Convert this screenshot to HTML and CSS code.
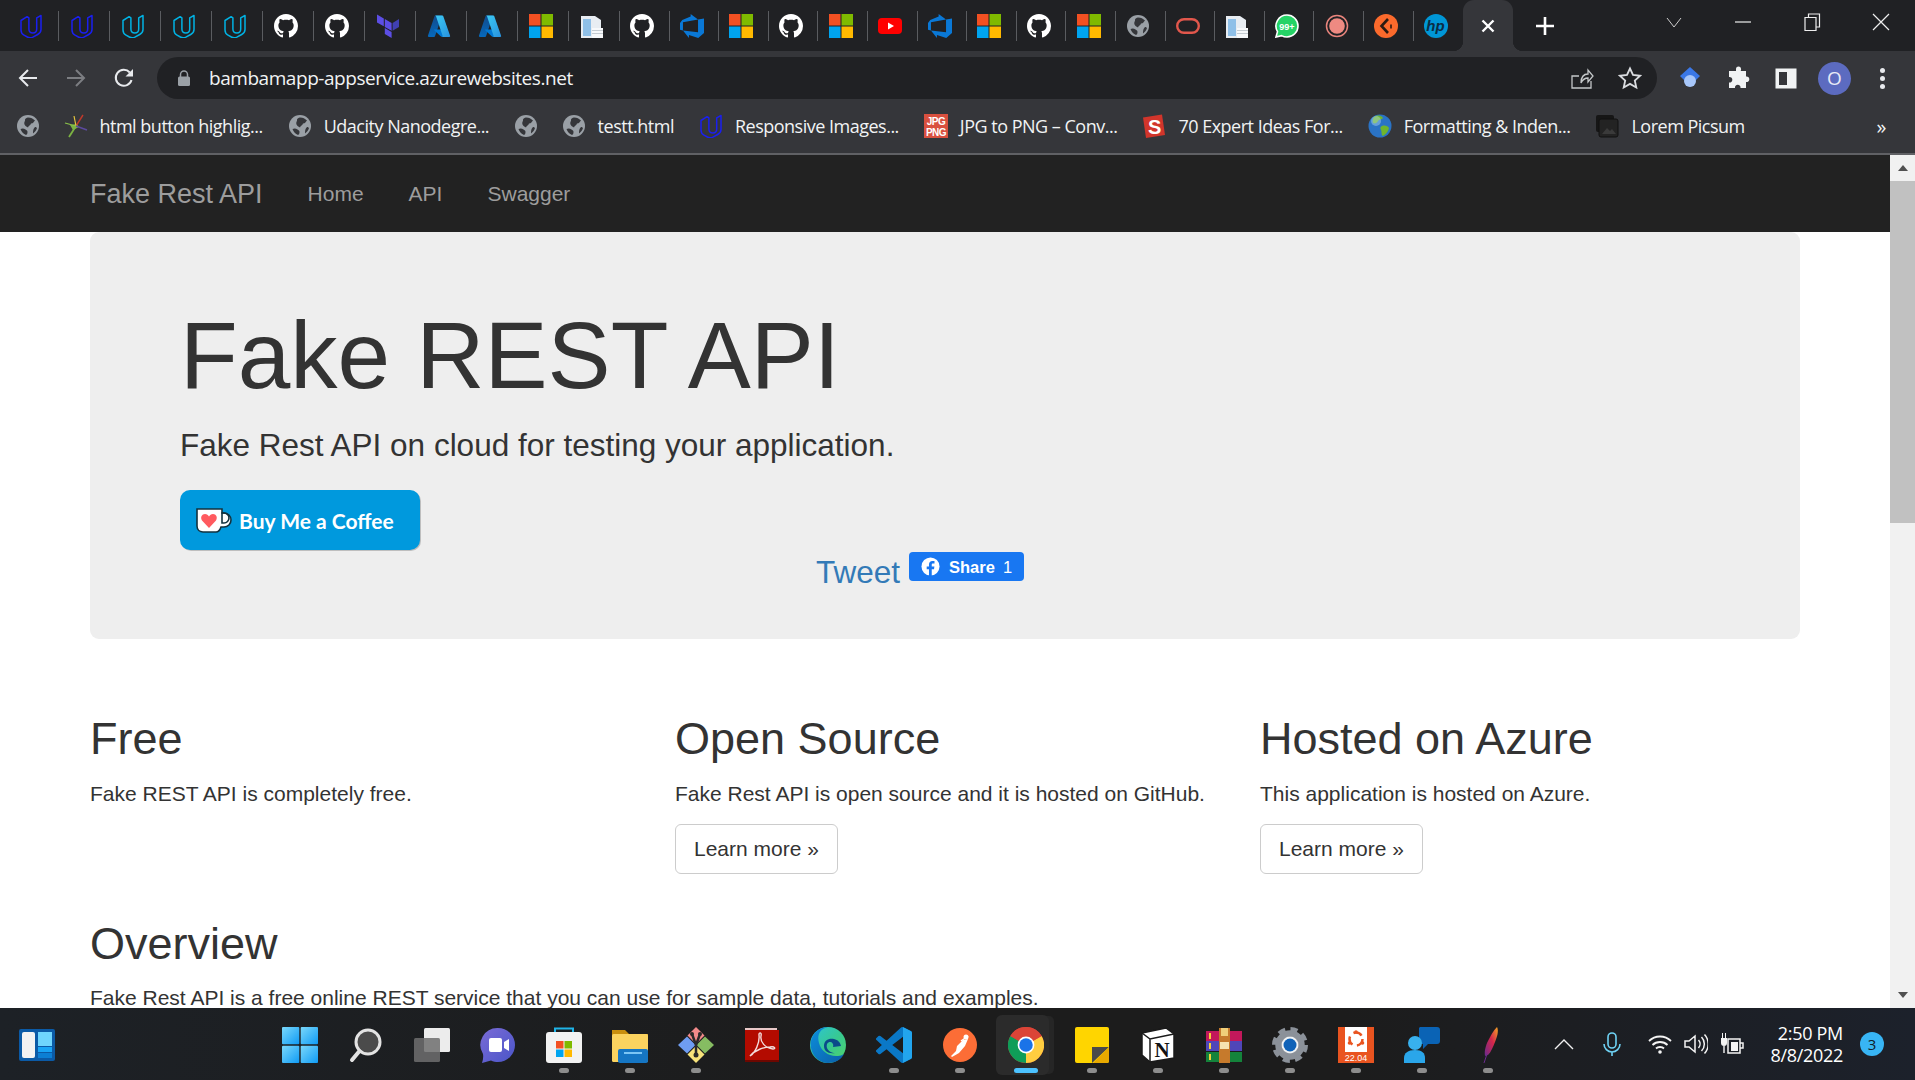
FILE: index.html
```html
<!DOCTYPE html>
<html lang="en">
<head>
    <meta charset="UTF-8">
    <title>Fake Rest API</title>
    <link rel="stylesheet" href="styles.css">
</head>
<body>
    <svg class="sprite" width="0" height="0">
        <defs>
            <linearGradient id="g-start" x1="0" y1="0" x2="1" y2="1"><stop offset="0" stop-color="#7ad8fb"/><stop offset="1" stop-color="#0f9bf5"/></linearGradient>
            <linearGradient id="g-az1" x1="0" y1="0" x2="0" y2="1"><stop offset="0" stop-color="#114a8b"/><stop offset="1" stop-color="#0669bc"/></linearGradient>
            <linearGradient id="g-az2" x1="0" y1="0" x2="1" y2="1"><stop offset="0" stop-color="#3ccbf4"/><stop offset="1" stop-color="#2892df"/></linearGradient>
            <linearGradient id="g-edge" x1="0" y1="0" x2="1" y2="1"><stop offset="0" stop-color="#2cc4d8"/><stop offset=".55" stop-color="#38c98e"/><stop offset="1" stop-color="#52d36a"/></linearGradient>
            <linearGradient id="g-edge2" x1="0" y1="0" x2="1" y2="1"><stop offset="0" stop-color="#0d8fdc"/><stop offset="1" stop-color="#0a5fa8"/></linearGradient>
            <linearGradient id="g-teams" x1="0" y1="0" x2="1" y2="1"><stop offset="0" stop-color="#7a6bd6"/><stop offset="1" stop-color="#4a55c8"/></linearGradient>
            <linearGradient id="g-feather" x1="1" y1="0" x2="0" y2="1"><stop offset="0" stop-color="#f5a623"/><stop offset=".45" stop-color="#d5264b"/><stop offset="1" stop-color="#6a2b8e"/></linearGradient>

            <symbol id="i-uda" viewBox="0 0 24 24"><path fill="none" stroke="currentColor" stroke-width="1.5" stroke-linejoin="round" d="M2 6.5V16c0 2.6 1 4 3 5.1l3.4 1.9c2 1 3.700 1 5.500.1l4.800-2.600c2-1.100 3.300-2.600 3.300-5V1.500l-4.300 2.400V15c0 2.500-1.700 4-3.900 4s-3.900-1.500-3.900-4V3.900l-1.800-1.200z"/></symbol>
            <symbol id="i-gh" viewBox="0 0 16 16"><path fill="#fff" d="M8 0C3.580 0 0 3.580 0 8c0 3.540 2.290 6.530 5.470 7.590.4.070.55-.17.55-.38 0-.19-.01-.82-.01-1.490-2.010.37-2.530-.49-2.690-.94-.09-.23-.48-.94-.82-1.130-.28-.15-.68-.52-.01-.53.63-.01 1.080.58 1.230.82.72 1.210 1.870.87 2.330.66.07-.52.28-.87.51-1.070-1.780-.2-3.640-.89-3.640-3.950 0-.87.31-1.590.82-2.150-.08-.2-.36-1.020.08-2.120 0 0 .67-.21 2.200.82.64-.18 1.320-.27 2-.27.68 0 1.360.09 2 .27 1.530-1.040 2.200-.82 2.200-.82.44 1.100.16 1.920.08 2.120.51.56.82 1.270.82 2.150 0 3.070-1.870 3.750-3.650 3.950.29.25.54.73.54 1.480 0 1.070-.01 1.930-.01 2.200 0 .21.15.46.55.38A8.013 8.013 0 0016 8c0-4.420-3.580-8-8-8z"/></symbol>
            <symbol id="i-tf" viewBox="0 0 24 24"><g fill="#5c4ee5"><path d="M1 .5l6.800 3.900v7.900L1 8.400z"/><path d="M8.800 5l6.800 3.900v7.900L8.800 12.900z"/><path d="M8.800 14.100l6.800 3.900v6l-6.800-3.900z"/><path fill="#4040b2" d="M16.600 8.900L23 5v7.900l-6.400 3.900z"/></g></symbol>
            <symbol id="i-az" viewBox="0 0 24 24"><path fill="url(#g-az1)" d="M8.500 1.500h6.600L8 22.200a1 1 0 0 1-1 .7H1.900a1 1 0 0 1-.9-1.400L7.500 2.200a1 1 0 0 1 1-.7z"/><path fill="#0078d4" d="M18 15.500H7.500a.5.500 0 0 0-.3.800l6.700 6.200c.2.200.4.300.7.300h5.900z"/><path fill="url(#g-az2)" d="M16.300 2.200a1 1 0 0 0-1-.7H8c.500 0 .800.300 1 .7l6.500 19.300a1 1 0 0 1-1 1.400h7.500a1 1 0 0 0 1-1.400z"/></symbol>
            <symbol id="i-ms" viewBox="0 0 24 24"><path fill="#f25022" d="M0 0h11.500v11.500H0z"/><path fill="#7fba00" d="M12.500 0H24v11.500H12.500z"/><path fill="#00a4ef" d="M0 12.500h11.500V24H0z"/><path fill="#ffb900" d="M12.500 12.500H24V24H12.500z"/></symbol>
            <symbol id="i-doc" viewBox="0 0 24 24"><path fill="#e8edf2" d="M1 2h14l6 4v18H1z"/><path fill="#8fc0e8" d="M3 5h8v17H3z"/><path fill="#f7f9fb" d="M12 14h11v10H12z"/><path fill="#c5ccd2" d="M12 16h11v1H12zm0 3h11v1H12z"/></symbol>
            <symbol id="i-devops" viewBox="0 0 24 24"><path fill="#0a78d6" d="M0 8.877L2.247 5.910l8.405-3.416V.022l7.370 5.393L2.966 8.338v8.225L0 15.707zm24-4.450v14.651l-5.753 4.900-9.303-3.057v3.056l-5.978-7.416 15.057 1.798V5.415z"/></symbol>
            <symbol id="i-yt" viewBox="0 0 24 24"><rect y="4" width="24" height="16" rx="4" fill="#f00"/><path fill="#fff" d="M10 8.500l6 3.500-6 3.500z"/></symbol>
            <symbol id="i-globe" viewBox="0 0 24 24"><circle cx="12" cy="12" r="11" fill="#9aa0a6"/><path fill="#35363a" d="M12 3.500c3.500 0 4.500 1 7 3-1.500 1.500-1.500 3-4 3-.5 2-2.500 2-3 4-1-1-2.500-1-3.500-3C7.500 8.500 9.500 7 9 5.500 9.500 4.500 10.500 3.500 12 3.500zM4.500 15c2-1 3.500-.5 5 .5 1 1 2 1 2 2.500s-.5 2.500-1.500 3c-2.500-1-4.500-3-5.500-6zM19 13c1 0 1.500.5 2 1-.500 2-2 4-4 5.500 0-2.500 0-4.500 2-6.500z"/></symbol>
            <symbol id="i-oracle" viewBox="0 0 24 24"><rect x="1.200" y="5.200" width="21.600" height="13.600" rx="6.800" fill="none" stroke="#e2574c" stroke-width="2.400"/></symbol>
            <symbol id="i-wa" viewBox="0 0 24 24"><path fill="#25d366" stroke="#fff" stroke-width="1.600" d="M12 1a11 11 0 0 1 0 22c-2 0-3.800-.5-5.400-1.400L1 23l1.500-5.400A11 11 0 0 1 12 1z"/><text x="12" y="15.500" class="wa-txt">99+</text></symbol>
            <symbol id="i-rec" viewBox="0 0 24 24"><circle cx="12" cy="12" r="10.500" fill="none" stroke="#e8847c" stroke-width="1.500"/><circle cx="12" cy="12" r="7.800" fill="#ee8a82"/></symbol>
            <symbol id="i-orange" viewBox="0 0 24 24"><circle cx="12" cy="12" r="12" fill="#fb6a2c"/><path fill="none" stroke="#2b1a12" stroke-width="2.600" d="M14 5l-6.500 7 6.500 7"/><path fill="none" stroke="#2b1a12" stroke-width="1.600" d="M17 10.500v4"/></symbol>
            <symbol id="i-hp" viewBox="0 0 24 24"><circle cx="12" cy="12" r="12" fill="#0096d6"/><text x="11.500" y="17" class="hp-txt">hp</text></symbol>
            <symbol id="i-tint" viewBox="0 0 24 24"><path fill="none" stroke="#7cb342" stroke-width="1.800" d="M12 12L5 23"/><path fill="#7cb342" d="M6 11l7-1 2 3-6 3z"/><path fill="none" stroke="#c0392b" stroke-width="1.400" d="M12 12l7-11"/><path fill="none" stroke="#e3c33d" stroke-width="1.200" d="M12 12L10 2"/><path fill="none" stroke="#5c4a9e" stroke-width="1.400" d="M12 12l11 4"/><path fill="none" stroke="#8bc34a" stroke-width="1.200" d="M12 12L1 9"/></symbol>
            <symbol id="i-jpg" viewBox="0 0 24 24"><rect width="24" height="24" fill="#d9503f"/><text x="12" y="10.500" class="jpg-txt">JPG</text><text x="12" y="21.500" class="jpg-txt">PNG</text></symbol>
            <symbol id="i-s" viewBox="0 0 24 24"><path fill="#d1352b" d="M1 3.500L20 .5 23 21 4 24z"/><text x="12.500" y="19.500" class="s-txt">S</text></symbol>
            <symbol id="i-earth" viewBox="0 0 24 24"><circle cx="12" cy="12" r="11.500" fill="#2a73c5"/><path fill="#6fb52c" d="M8 2c3-1 6 0 7 2-1 2-4 1-5 3s-3 3-5 2C4 6 5 3 8 2zm6 10c3-1 6 0 7 2-1 4-3 6-6 8-2-1-1-4-2-6s-1-3 1-4z"/><circle cx="8" cy="7" r="5" fill="#bfe1fa" opacity=".4"/></symbol>
            <symbol id="i-lorem" viewBox="0 0 24 24"><rect x="1" y="1" width="18" height="17" rx="2" fill="#161616"/><rect x="4" y="5" width="19" height="18" rx="2" fill="#232323" stroke="#111"/><path fill="#3a3a3a" d="M7 20l5-6 3 3 2-2 4 5z"/></symbol>

            <symbol id="i-win" viewBox="0 0 36 36"><g fill="url(#g-start)"><rect width="17.300" height="17.300" rx="1"/><rect x="18.700" width="17.300" height="17.300" rx="1"/><rect y="18.700" width="17.300" height="17.300" rx="1"/><rect x="18.700" y="18.700" width="17.300" height="17.300" rx="1"/></g></symbol>
            <symbol id="i-widget" viewBox="0 0 36 36"><rect width="36" height="32" y="2" rx="2" fill="#0b5aa6"/><rect x="3" y="5" width="13" height="26" rx="2" fill="#f2f2f2"/><rect x="19" y="5" width="14" height="14" fill="#6fd5fd"/><rect x="19" y="20" width="14" height="5" fill="#19a4f5"/><rect x="19" y="26" width="14" height="5" fill="#0c7fd4"/></symbol>
            <symbol id="i-search" viewBox="0 0 36 36"><circle cx="20" cy="15" r="12" fill="#4b4b4b" stroke="#e3e3e3" stroke-width="3"/><path stroke="#e3e3e3" stroke-width="4" stroke-linecap="round" d="M11.500 24L4 33"/></symbol>
            <symbol id="i-tv" viewBox="0 0 36 36"><rect x="10" y="1" width="26" height="24" rx="1.500" fill="#ececec"/><rect y="11" width="26" height="24" rx="1.500" fill="#6f6f6f" fill-opacity=".85"/></symbol>
            <symbol id="i-teams" viewBox="0 0 36 36"><path fill="url(#g-teams)" d="M18 1a17 17 0 0 1 0 34c-2 0-5-.5-7-1.500L2 36c1-3 1.500-6 1-9A17 17 0 0 1 18 1z"/><rect x="9" y="11" width="13" height="14" rx="2" fill="#fff"/><path fill="#fff" d="M24 15l5-3v12l-5-3z"/></symbol>
            <symbol id="i-store" viewBox="0 0 36 36"><path fill="none" stroke="#1fb4e8" stroke-width="2" d="M9 6V1.500h18V6"/><rect y="5" width="36" height="31" rx="3" fill="#f2f2f2"/><path fill="#f25022" d="M10 14h7.500v7.500H10z"/><path fill="#7fba00" d="M18.500 14H26v7.500h-7.500z"/><path fill="#00a4ef" d="M10 22.500h7.500V30H10z"/><path fill="#ffb900" d="M18.500 22.500H26V30h-7.500z"/></symbol>
            <symbol id="i-folder" viewBox="0 0 36 36"><path fill="#c98f0e" d="M0 3h13l4 4h19v6H0z"/><rect y="7" width="36" height="28" rx="1.500" fill="#fbd35f"/><rect x="6" y="22" width="30" height="14" rx="2" fill="#1576c4"/><rect x="12" y="25" width="18" height="2" fill="#7cc6f5"/></symbol>
            <symbol id="i-git" viewBox="0 0 36 36"><path fill="#f38a8a" d="M18 0l8.500 8.500L18 17 9.500 8.500z"/><path fill="#86bc62" d="M27 9.500l9 8.500-9 8.500L18.500 18z"/><path fill="#6f9df2" d="M9 9.500l8.500 8.500L9 26.500 0 18z"/><path fill="#f6e27a" d="M18 19l8.500 8.500L18 36l-8.500-8.500z"/><path stroke="#2a2a2a" stroke-width="2.500" fill="none" d="M14 7l4 11 4-11M18 18v9"/><circle cx="14" cy="7" r="2" fill="#2a2a2a"/><circle cx="22" cy="7" r="2" fill="#2a2a2a"/><circle cx="18" cy="28" r="2.500" fill="#2a2a2a"/></symbol>
            <symbol id="i-pdf" viewBox="0 0 36 36"><path fill="#e8c8c8" d="M1 1h32v3H1z"/><rect x="1" y="3" width="34" height="32" fill="#b30b00"/><rect x="1" y="33" width="34" height="2" fill="#6d0700"/><path fill="none" stroke="#f3dcdc" stroke-width="1.400" d="M6 29c5-3 10-13 9-21-.3-3 3-3 2 1-1 6 4 12 12 13 3 0 2-3-3-2-6 0-15 3-20 9z"/></symbol>
            <symbol id="i-edge" viewBox="0 0 36 36"><circle cx="18" cy="18" r="18" fill="url(#g-edge)"/><path fill="url(#g-edge2)" d="M1 14C3 5 10 0 18 0c-9 2-11 9-9 16 2 8 10 14 19 13 2 0 4-1 6-2-3 6-9 9-16 9C7 36-1 25 1 14z"/><path fill="#0b4b8a" d="M14 19c0-6 5-8 10-7 4 1 6 3 7 7l-8 1c1-3-1-5-3-5s-4 2-3 6c1 3 5 5 8 5-7 1-11-2-11-7z"/></symbol>
            <symbol id="i-code" viewBox="0 0 24 24"><path fill="#0a78c7" d="M23.150 2.587L18.210.21a1.494 1.494 0 0 0-1.705.29l-9.460 8.630-4.120-3.128a.999.999 0 0 0-1.276.057L.327 7.261A1 1 0 0 0 .326 8.740L3.899 12 .326 15.260a1 1 0 0 0 .001 1.479L1.650 17.940a.999.999 0 0 0 1.276.057l4.120-3.128 9.460 8.630a1.492 1.492 0 0 0 1.704.29l4.942-2.377A1.500 1.500 0 0 0 24 20.060V3.939a1.500 1.500 0 0 0-.85-1.352zm-5.146 14.861L10.826 12l7.178-5.448v10.896z"/><path fill="#22a5ee" d="M18 0.100l.2.110 4.950 2.377A1.500 1.500 0 0 1 24 3.939V20.060a1.500 1.500 0 0 1-.85 1.352l-4.950 2.377-.2.100z"/></symbol>
            <symbol id="i-post" viewBox="0 0 36 36"><circle cx="18" cy="18" r="17" fill="#fc6d36"/><circle cx="24" cy="10" r="2.500" fill="#fff"/><path fill="#fff" d="M26 12l-3 7-6 7-7 4-1-1 5-5 1-5 6-6z"/><path stroke="#fff" stroke-width="1.500" d="M19 14l7-5"/></symbol>
            <symbol id="i-chrome" viewBox="0 0 24 24"><circle cx="12" cy="12" r="12" fill="#db4437"/><path fill="#0f9d58" d="M12 12L1.600 6A12 12 0 0 0 12 24l3-3z"/><path fill="#ffcd40" d="M12 12L22.400 6A12 12 0 0 1 12 24z"/><path fill="#db4437" d="M12 12L1.600 6A12 12 0 0 1 22.400 6z"/><circle cx="12" cy="12" r="5.600" fill="#fff"/><circle cx="12" cy="12" r="4.500" fill="#1a73e8"/></symbol>
            <symbol id="i-sticky" viewBox="0 0 36 36"><path fill="#ffd500" d="M3 0h30a2 2 0 0 1 2 2v32a2 2 0 0 1-2 2H3a2 2 0 0 1-2-2V2a2 2 0 0 1 2-2z"/><path fill="#4a4a4a" d="M18 36V20h17z"/><path fill="#e8a900" d="M35 20L19 36h14a2 2 0 0 0 2-2z"/></symbol>
            <symbol id="i-notion" viewBox="0 0 36 36"><path fill="#fff" stroke="#1a1a1a" stroke-width="1.500" d="M2 6l24-5 8 6v24L10 35l-8-7z"/><path fill="none" stroke="#1a1a1a" stroke-width="1.500" d="M2 6l8 6 24-5M10 12v23"/><text x="22" y="30" class="notion-txt">N</text></symbol>
            <symbol id="i-rar" viewBox="0 0 36 36"><rect y="4" width="36" height="10" fill="#c2185b"/><rect y="14" width="36" height="10" fill="#4f46b8"/><rect y="25" width="36" height="10" fill="#14833b"/><rect x="13" y="1" width="11" height="35" fill="#c67a2c"/><rect x="15" y="1" width="7" height="8" fill="#efcf7a"/><rect x="14" y="15" width="9" height="7" fill="#f6e3b0"/><rect x="3" y="6" width="2" height="6" fill="#f6d13a"/><rect x="3" y="16" width="2" height="6" fill="#f6d13a"/><rect x="3" y="27" width="2" height="6" fill="#f6d13a"/></symbol>
            <symbol id="i-gear" viewBox="0 0 36 36"><circle cx="18" cy="18" r="11.500" fill="none" stroke="#8b9199" stroke-width="6.500"/><circle cx="18" cy="18" r="15.500" fill="none" stroke="#8b9199" stroke-width="5" stroke-dasharray="7 5.170"/><circle cx="18" cy="18" r="8.500" fill="#f1f3f4"/><circle cx="18" cy="18" r="6.500" fill="#0f62b8"/></symbol>
            <symbol id="i-ubuntu" viewBox="0 0 36 36"><rect width="36" height="36" fill="#e95420"/><rect x="7" width="22" height="25" fill="#fff"/><circle cx="18" cy="12" r="6.500" fill="none" stroke="#e95420" stroke-width="2.500" stroke-dasharray="9 4.600"/><circle cx="18" cy="5" r="1.800" fill="#e95420"/><circle cx="11.500" cy="16" r="1.800" fill="#e95420"/><circle cx="24.500" cy="16" r="1.800" fill="#e95420"/><text x="18" y="34" class="ubu-txt">22.04</text></symbol>
            <symbol id="i-people" viewBox="0 0 36 36"><path fill="#0a63b5" d="M16 0h17a3 3 0 0 1 3 3v11a3 3 0 0 1-3 3H24l-5 5v-5h-1a3 3 0 0 1-3-3V1z"/><circle cx="11" cy="16" r="7" fill="#38b1ee"/><path fill="#2aa6ea" d="M0 36v-5c0-5 4-8 11-8s10 3 10 8v5z"/></symbol>
            <symbol id="i-feather" viewBox="0 0 36 36"><path fill="url(#g-feather)" d="M27 0c2 4 0 10-2 15s-4 10-7 13l-3 1c-1-5 1-11 3-15s5-10 9-14z"/><path stroke="#6a2b8e" fill="none" d="M17 27l-3 9"/></symbol>
        </defs>
    </svg>

    <div class="tab-strip">
        <div class="tab"><svg class="fav fav-blue"><use href="#i-uda"/></svg></div>
        <div class="tab"><svg class="fav fav-blue"><use href="#i-uda"/></svg></div>
        <div class="tab"><svg class="fav fav-cyan"><use href="#i-uda"/></svg></div>
        <div class="tab"><svg class="fav fav-cyan"><use href="#i-uda"/></svg></div>
        <div class="tab"><svg class="fav fav-cyan"><use href="#i-uda"/></svg></div>
        <div class="tab"><svg class="fav"><use href="#i-gh"/></svg></div>
        <div class="tab"><svg class="fav"><use href="#i-gh"/></svg></div>
        <div class="tab"><svg class="fav"><use href="#i-tf"/></svg></div>
        <div class="tab"><svg class="fav"><use href="#i-az"/></svg></div>
        <div class="tab"><svg class="fav"><use href="#i-az"/></svg></div>
        <div class="tab"><svg class="fav"><use href="#i-ms"/></svg></div>
        <div class="tab"><svg class="fav"><use href="#i-doc"/></svg></div>
        <div class="tab tab-sm"><svg class="fav"><use href="#i-gh"/></svg></div>
        <div class="tab tab-sm"><svg class="fav"><use href="#i-devops"/></svg></div>
        <div class="tab tab-sm"><svg class="fav"><use href="#i-ms"/></svg></div>
        <div class="tab tab-sm"><svg class="fav"><use href="#i-gh"/></svg></div>
        <div class="tab tab-sm"><svg class="fav"><use href="#i-ms"/></svg></div>
        <div class="tab tab-sm"><svg class="fav"><use href="#i-yt"/></svg></div>
        <div class="tab tab-sm"><svg class="fav"><use href="#i-devops"/></svg></div>
        <div class="tab tab-sm"><svg class="fav"><use href="#i-ms"/></svg></div>
        <div class="tab tab-sm"><svg class="fav"><use href="#i-gh"/></svg></div>
        <div class="tab tab-sm"><svg class="fav"><use href="#i-ms"/></svg></div>
        <div class="tab tab-sm"><svg class="fav"><use href="#i-globe"/></svg></div>
        <div class="tab tab-sm"><svg class="fav"><use href="#i-oracle"/></svg></div>
        <div class="tab tab-sm"><svg class="fav"><use href="#i-doc"/></svg></div>
        <div class="tab tab-sm"><svg class="fav"><use href="#i-wa"/></svg></div>
        <div class="tab tab-sm"><svg class="fav"><use href="#i-rec"/></svg></div>
        <div class="tab tab-sm"><svg class="fav"><use href="#i-orange"/></svg></div>
        <div class="tab tab-sm tab-last"><svg class="fav"><use href="#i-hp"/></svg></div>
        <div class="tab-active">
            <svg class="glyph" viewBox="0 0 24 24"><path stroke="#fff" stroke-width="2.400" d="M6.500 6.500l11 11m0-11l-11 11"/></svg>
        </div>
        <svg class="glyph new-tab" viewBox="0 0 24 24"><path stroke="#fff" stroke-width="2.600" d="M12 3v18M3 12h18"/></svg>
        <div class="win-btns">
            <div class="win-btn"><svg class="glyph" viewBox="0 0 24 24"><path fill="none" stroke="#ccc" stroke-width="1" d="M5 8l7 9 7-9"/></svg></div>
            <div class="win-btn"><svg class="glyph" viewBox="0 0 24 24"><path stroke="#eee" stroke-width="1.200" d="M4 12h16"/></svg></div>
            <div class="win-btn"><svg class="glyph" viewBox="0 0 24 24"><path fill="none" stroke="#eee" stroke-width="1.200" d="M5 7.500h11v13H5zM8.500 7.500V4h11v13H16"/></svg></div>
            <div class="win-btn"><svg class="glyph" viewBox="0 0 24 24"><path stroke="#eee" stroke-width="1.200" d="M4 4l16 16m0-16L4 20"/></svg></div>
        </div>
    </div>

    <div class="toolbar">
        <div class="tool-btn"><svg class="glyph" viewBox="0 0 24 24"><path fill="none" stroke="#e8eaed" stroke-width="2" d="M21 12H4m8-8l-8 8 8 8"/></svg></div>
        <div class="tool-btn"><svg class="glyph" viewBox="0 0 24 24"><path fill="none" stroke="#7c7e82" stroke-width="2" d="M3 12h17m-8-8l8 8-8 8"/></svg></div>
        <div class="tool-btn"><svg class="glyph" viewBox="0 0 24 24"><path fill="none" stroke="#e8eaed" stroke-width="2" d="M19.500 14a8 8 0 1 1-1.700-7.500"/><path fill="#e8eaed" d="M21 3v7.500h-7.500z"/></svg></div>
        <div class="omnibox">
            <svg class="lock" viewBox="0 0 14 16"><path fill="none" stroke="#9aa0a6" stroke-width="1.500" d="M3.500 7V4.500a3.500 3.500 0 0 1 7 0V7"/><rect x="1" y="6.500" width="12" height="9.500" rx="1.500" fill="#9aa0a6"/></svg>
            <span class="url">bambamapp-appservice.azurewebsites.net</span>
            <svg class="glyph omni-share" viewBox="0 0 24 24"><path fill="none" stroke="#c4c7c9" stroke-width="1.300" d="M21 15v7H2V10h7M11 17c0-6 3-9 7-9V4l5 6-5 6v-4c-3 0-5 1-7 5z"/></svg>
            <svg class="glyph omni-star" viewBox="0 0 24 24"><path fill="none" stroke="#dadce0" stroke-width="1.800" d="M12 2.500l3 6.500 7 .8-5.200 4.700 1.500 7L12 17.900 5.700 21.500l1.500-7L2 9.800 9 9z"/></svg>
        </div>
        <div class="tool-btn tool-first"><svg class="glyph" viewBox="0 0 24 24"><path fill="#3b78e7" d="M12 1L22 10l-4 4H6l-4-4z"/><circle cx="12" cy="15" r="6" fill="#a8c7fa"/></svg></div>
        <div class="tool-btn"><svg class="glyph" viewBox="0 0 24 24"><path fill="#f1f3f4" d="M10 2a2.500 2.500 0 0 1 5 0 2 2 0 0 1-.4 2H20v5.500a2.800 2.800 0 1 1 0 5.500v6h-5.500a2.800 2.800 0 1 0-5.500 0H3v-5.500a2.800 2.800 0 1 0 0-5.500V4h7z" transform="translate(0 1)"/></svg></div>
        <div class="tool-btn"><svg class="glyph" viewBox="0 0 24 24"><rect x="2" y="3" width="20" height="19" fill="#f1f3f4" stroke="#f1f3f4"/><rect x="5" y="6" width="8" height="13" fill="#35363a"/></svg></div>
        <div class="tool-btn"><span class="avatar">O</span></div>
        <div class="tool-btn"><span class="kebab"></span></div>
    </div>

    <div class="bookmarks">
        <div class="bm bm-empty"><svg class="fav"><use href="#i-globe"/></svg></div>
        <div class="bm"><svg class="fav"><use href="#i-tint"/></svg><span>html button highlig...</span></div>
        <div class="bm"><svg class="fav"><use href="#i-globe"/></svg><span>Udacity Nanodegre...</span></div>
        <div class="bm bm-empty"><svg class="fav"><use href="#i-globe"/></svg></div>
        <div class="bm"><svg class="fav"><use href="#i-globe"/></svg><span>testt.html</span></div>
        <div class="bm"><svg class="fav fav-blue"><use href="#i-uda"/></svg><span>Responsive Images...</span></div>
        <div class="bm"><svg class="fav"><use href="#i-jpg"/></svg><span>JPG to PNG – Conv...</span></div>
        <div class="bm"><svg class="fav"><use href="#i-s"/></svg><span>70 Expert Ideas For...</span></div>
        <div class="bm"><svg class="fav"><use href="#i-earth"/></svg><span>Formatting &amp; Inden...</span></div>
        <div class="bm"><svg class="fav"><use href="#i-lorem"/></svg><span>Lorem Picsum</span></div>
        <div class="bm-more">»</div>
    </div>

    <div class="viewport">
        <div class="page">
            <nav class="navbar">
                <a class="brand" href="#">Fake Rest API</a>
                <a class="nav-link" href="#">Home</a>
                <a class="nav-link" href="#">API</a>
                <a class="nav-link" href="#">Swagger</a>
            </nav>
            <div class="container">
                <div class="jumbotron">
                    <h1>Fake REST API</h1>
                    <p class="lead">Fake Rest API on cloud for testing your application.</p>
                    <a class="kofi" href="#">
                        <svg class="mug" viewBox="0 0 36 25">
                            <path fill="#fff" stroke="#12323f" stroke-width="1.600" d="M1 1h25v4h2a7 7 0 0 1 0 14h-3c-1 3-2 5-5 5H7c-3 0-6-2-6-6z"/>
                            <path fill="none" stroke="#12323f" stroke-width="1.600" d="M26 5v10h2a5 5 0 0 0 0-10z"/>
                            <path fill="#ff5a5f" d="M13 20L6 12.500C4 9 6 6 9 6c2 0 3 1 4 2.500C14 7 15 6 17 6c3 0 5 3 3 6.500z"/>
                        </svg>
                        Buy Me a Coffee
                    </a>
                    <div class="social">
                        <a class="tweet" href="#">Tweet</a>
                        <a class="fb-share" href="#">
                            <svg class="fb-f" viewBox="0 0 20 20"><circle cx="10" cy="10" r="9.500" fill="#fff"/><path fill="#1877f2" d="M11.300 20v-7h2.400l.4-3h-2.800V8.300c0-.9.3-1.400 1.500-1.400h1.400V4.300c-.5-.1-1.300-.2-2.200-.2-2.200 0-3.600 1.300-3.600 3.700V10H6v3h2.400v7z"/></svg>
                            <b>Share</b><span class="fb-count">1</span>
                        </a>
                    </div>
                </div>
                <div class="cols">
                    <div>
                        <h2>Free</h2>
                        <p>Fake REST API is completely free.</p>
                    </div>
                    <div>
                        <h2>Open Source</h2>
                        <p>Fake Rest API is open source and it is hosted on GitHub.</p>
                        <p><a class="btn" href="#">Learn more »</a></p>
                    </div>
                    <div>
                        <h2>Hosted on Azure</h2>
                        <p>This application is hosted on Azure.</p>
                        <p><a class="btn" href="#">Learn more »</a></p>
                    </div>
                </div>
                <h2>Overview</h2>
                <p>Fake Rest API is a free online REST service that you can use for sample data, tutorials and examples.</p>
            </div>
        </div>
        <div class="scrollbar">
            <svg class="sb-arrow" viewBox="0 0 10 6"><path fill="#505050" d="M5 0l5 6H0z"/></svg>
            <div class="sb-thumb"></div>
            <svg class="sb-arrow sb-down" viewBox="0 0 10 6"><path fill="#505050" d="M5 6L0 0h10z"/></svg>
        </div>
    </div>

    <div class="taskbar">
        <div class="task widgets"><svg class="task-ico"><use href="#i-widget"/></svg></div>
        <div class="task"><svg class="task-ico"><use href="#i-win"/></svg></div>
        <div class="task"><svg class="task-ico"><use href="#i-search"/></svg></div>
        <div class="task"><svg class="task-ico"><use href="#i-tv"/></svg></div>
        <div class="task"><svg class="task-ico"><use href="#i-teams"/></svg></div>
        <div class="task on"><svg class="task-ico"><use href="#i-store"/></svg></div>
        <div class="task on"><svg class="task-ico"><use href="#i-folder"/></svg></div>
        <div class="task on"><svg class="task-ico"><use href="#i-git"/></svg></div>
        <div class="task"><svg class="task-ico"><use href="#i-pdf"/></svg></div>
        <div class="task"><svg class="task-ico"><use href="#i-edge"/></svg></div>
        <div class="task on"><svg class="task-ico"><use href="#i-code"/></svg></div>
        <div class="task on"><svg class="task-ico"><use href="#i-post"/></svg></div>
        <div class="task on current"><svg class="task-ico"><use href="#i-chrome"/></svg></div>
        <div class="task on"><svg class="task-ico"><use href="#i-sticky"/></svg></div>
        <div class="task on"><svg class="task-ico"><use href="#i-notion"/></svg></div>
        <div class="task on"><svg class="task-ico"><use href="#i-rar"/></svg></div>
        <div class="task on"><svg class="task-ico"><use href="#i-gear"/></svg></div>
        <div class="task on"><svg class="task-ico"><use href="#i-ubuntu"/></svg></div>
        <div class="task on"><svg class="task-ico"><use href="#i-people"/></svg></div>
        <div class="task on"><svg class="task-ico"><use href="#i-feather"/></svg></div>
        <div class="tray">
            <svg class="glyph" viewBox="0 0 24 24"><path fill="none" stroke="#f1f1f1" stroke-width="1.400" d="M3 17l9-9 9 9"/></svg>
            <svg class="glyph tray-mic" viewBox="0 0 24 24"><rect x="8" y="1" width="8" height="15" rx="4" fill="none" stroke="#6fd3f5" stroke-width="1.600"/><path fill="none" stroke="#6fd3f5" stroke-width="1.600" d="M4 12a8 8 0 0 0 16 0M12 20v4"/></svg>
            <svg class="glyph tray-wifi" viewBox="0 0 24 24"><path fill="none" stroke="#f4f4f4" stroke-width="1.800" d="M1 9c6-6 16-6 22 0M4.500 13c4-4 11-4 15 0M8 16.500c2-2 6-2 8 0"/><circle cx="12" cy="20" r="1.800" fill="#f4f4f4"/></svg>
            <svg class="glyph tray-sm" viewBox="0 0 24 24"><path fill="none" stroke="#f4f4f4" stroke-width="1.500" d="M1 9h4l6-5v16l-6-5H1zM14.500 8a6 6 0 0 1 0 8M17.500 5a10 10 0 0 1 0 14M20.500 2.500a14 14 0 0 1 0 19"/></svg>
            <svg class="glyph tray-sm" viewBox="0 0 24 24"><path fill="none" stroke="#f4f4f4" stroke-width="1.500" d="M8 7h12v14H8zM20 11h3v5h-3"/><path fill="#f4f4f4" d="M11 10h7v9h-7zM1 6h6v5a3 3 0 0 1-6 0zM2 1h1v5H2zm3 0h1v5H5zM3.300 13h1.400v8H3.300z"/></svg>
            <div class="clock"><div>2:50 PM</div><div>8/8/2022</div></div>
            <span class="notif">3</span>
        </div>
    </div>
</body>
</html>
```

FILE: styles.css
```css
html, body { margin: 0; height: 100%; }
body { height: 1080px; overflow: hidden; display: flex; flex-direction: column; font-family: "Liberation Sans", Arial, sans-serif; background: #fff; }
.sprite { position: absolute; }
.wa-txt { font: 700 9px "Liberation Sans", sans-serif; fill: #fff; text-anchor: middle; }
.hp-txt { font: italic 700 15px "Liberation Sans", sans-serif; fill: #0b2d44; text-anchor: middle; }
.jpg-txt { font: 700 10px "Liberation Sans", sans-serif; fill: #fff; text-anchor: middle; }
.s-txt { font: 700 20px "Liberation Sans", sans-serif; fill: #fff; text-anchor: middle; }
.notion-txt { font: 700 21px "Liberation Serif", serif; fill: #111; text-anchor: middle; }
.ubu-txt { font: 9px "Liberation Sans", sans-serif; fill: #fff; text-anchor: middle; }

/* browser chrome */
.tab-strip { height: 51px; flex: none; background: #202124; display: flex; align-items: center; padding-left: 8px; }
.tab { width: 51px; height: 30px; box-sizing: border-box; padding-right: 4px; display: flex; align-items: center; justify-content: center; border-right: 1px solid #5a5c60; flex: none; }
.tab-sm { width: 49.6px; }
.tab-last { border-right: none; }
.fav { width: 24px; height: 24px; flex: none; }
.fav-blue { color: #1a1ff0; }
.fav-cyan { color: #00b2e3; }
.glyph { width: 24px; height: 24px; flex: none; }
.tab-active { position: relative; width: 50px; height: 51px; align-self: flex-start; background: #35363a; border-radius: 11px 11px 0 0; display: flex; align-items: center; justify-content: center; flex: none; }
.tab-active::before, .tab-active::after { content: ""; position: absolute; bottom: 0; width: 10px; height: 10px; }
.tab-active::before { left: -10px; background: radial-gradient(circle at 0 0, #202124 10px, #35363a 10.500px); }
.tab-active::after { right: -10px; background: radial-gradient(circle at 100% 0, #202124 10px, #35363a 10.500px); }
.new-tab { margin-left: 20px; }
.win-btns { margin-left: auto; display: flex; align-self: flex-start; }
.win-btn { width: 69px; height: 44px; display: flex; align-items: center; justify-content: center; }

.toolbar { height: 42px; flex: none; padding: 6px 0 0 4px; background: #35363a; display: flex; align-items: center; }
.tool-btn { width: 48px; height: 42px; display: flex; align-items: center; justify-content: center; flex: none; }
.tool-first { margin-left: 9.400px; }
.omnibox { width: 1500px; height: 42px; margin-left: 9px; padding: 0 15px 0 20px; box-sizing: border-box; background: #202124; border-radius: 21px; display: flex; align-items: center; flex: none; }
.lock { width: 14px; height: 16px; margin-right: 18px; flex: none; }
.url { font: 19px "Open Sans", sans-serif; letter-spacing: -.45px; color: #f1f3f4; white-space: nowrap; }
.omni-share { margin-left: auto; }
.omni-star { margin-left: 24px; }
.avatar { width: 33px; height: 33px; border-radius: 50%; background: #5c6bc0; color: #e8eaf6; font: 19px "Open Sans", sans-serif; display: flex; align-items: center; justify-content: center; }
.kebab { width: 5px; height: 5px; border-radius: 50%; background: #e8eaed; box-shadow: 0 -8px 0 #e8eaed, 0 8px 0 #e8eaed; }

.bookmarks { height: 54px; flex: none; background: #35363a; border-bottom: 2px solid #606165; padding-left: 16px; display: flex; align-items: center; color: #f1f3f4; font: 18px "Open Sans", sans-serif; letter-spacing: -.5px; position: relative; }
.bm { display: flex; align-items: center; gap: 12px; margin-right: 25px; white-space: nowrap; flex: none; }
.bm-empty { margin-right: 23.500px; }
.bm-more { margin-left: auto; margin-right: 29px; font-size: 20px; }

/* page */
.viewport { flex: 1; min-height: 0; display: flex; overflow: hidden; }
.page { flex: 1; min-width: 0; overflow: hidden; color: #333; font-size: 21px; line-height: 30px; }
.page a { text-decoration: none; }
.navbar { height: 77px; box-sizing: border-box; padding-left: 67.500px; background: #222; display: flex; align-items: center; }
.brand { padding: 0 22.500px; color: #9d9d9d; font-size: 27px; }
.nav-link { padding: 0 22.500px; color: #9d9d9d; }
.container { width: 1755px; margin: 0 auto; padding: 0 22.500px; box-sizing: border-box; }
.jumbotron { padding: 72px 90px 44px; background: #eee; border-radius: 9px; margin-bottom: 45px; }
h1 { margin: 0 0 15px; font-size: 94.500px; line-height: 1.1; font-weight: 400; }
h2 { margin: 30px 0 15px; font-size: 45px; line-height: 1.1; font-weight: 400; }
p { margin: 0 0 15px; }
.lead { font-size: 31.500px; line-height: 45px; margin-bottom: 22.500px; }
.kofi { width: 240px; height: 60px; box-sizing: border-box; padding-left: 16px; background: #0099dd; color: #fff; border-radius: 10px; box-shadow: 1px 1px 0 rgba(0,0,0,.2); display: flex; align-items: center; gap: 7px; font: 700 21px Lato, sans-serif; }
.mug { width: 36px; height: 25px; flex: none; }
.social { display: flex; align-items: center; justify-content: center; gap: 9px; height: 45px; padding-right: 50px; }
.tweet { color: #337ab7; font-size: 31.500px; line-height: 45px; }
.fb-share { width: 115px; height: 29px; margin-bottom: 12px; background: #1877f2; color: #fff; border-radius: 4px; display: flex; align-items: center; padding-left: 12px; box-sizing: border-box; font-size: 16.500px; line-height: 1; }
.fb-f { width: 19px; height: 19px; margin-right: 9px; flex: none; }
.fb-count { margin-left: 8px; }
.cols { display: grid; grid-template-columns: repeat(3, 1fr); gap: 45px; }
.btn { display: inline-block; padding: 9px 18px; border: 1.500px solid #ccc; border-radius: 6px; color: #333; }

.scrollbar { width: 25px; flex: none; background: #f1f1f1; display: flex; flex-direction: column; align-items: center; }
.sb-arrow { width: 10px; height: 6px; margin: 10px 0; flex: none; }
.sb-thumb { width: 100%; height: 342px; background: #c1c1c1; }
.sb-down { margin-top: auto; }

/* taskbar */
.taskbar { height: 72px; flex: none; background: linear-gradient(90deg, #1d2126, #1c1c1c 45%, #1c1c1c 70%, #1c212b); display: flex; }
.task { position: relative; width: 66px; padding-top: 19px; box-sizing: border-box; display: flex; flex-direction: column; align-items: center; flex: none; }
.widgets { width: 36px; margin: 0 212px 0 19px; }
.task-ico { width: 36px; height: 36px; position: relative; }
.task.on::after { content: ""; position: absolute; bottom: 7px; left: 28px; width: 10px; height: 5px; border-radius: 3px; background: #8d8d8d; }
.task.current::before { content: ""; position: absolute; left: 3px; top: 7px; width: 53px; height: 60px; border-radius: 6px; background: #2b2b2b; box-shadow: 6px 0 0 -1px #262626; }
.task.current::after { left: 21px; width: 24px; background: #4cc2ff; }
.tray { display: flex; align-items: center; padding-left: 31px; color: #fff; }
.tray-mic, .tray-wifi { margin-left: 24px; }
.tray-sm { margin-left: 12px; }
.clock { width: 90px; margin-left: 9px; text-align: right; font: 18px/22px "Open Sans", sans-serif; letter-spacing: -.3px; }
.notif { width: 24px; height: 24px; margin-left: 17px; border-radius: 50%; background: #38b5f5; color: #10202c; font: 15px "Open Sans", sans-serif; display: flex; align-items: center; justify-content: center; }
```
